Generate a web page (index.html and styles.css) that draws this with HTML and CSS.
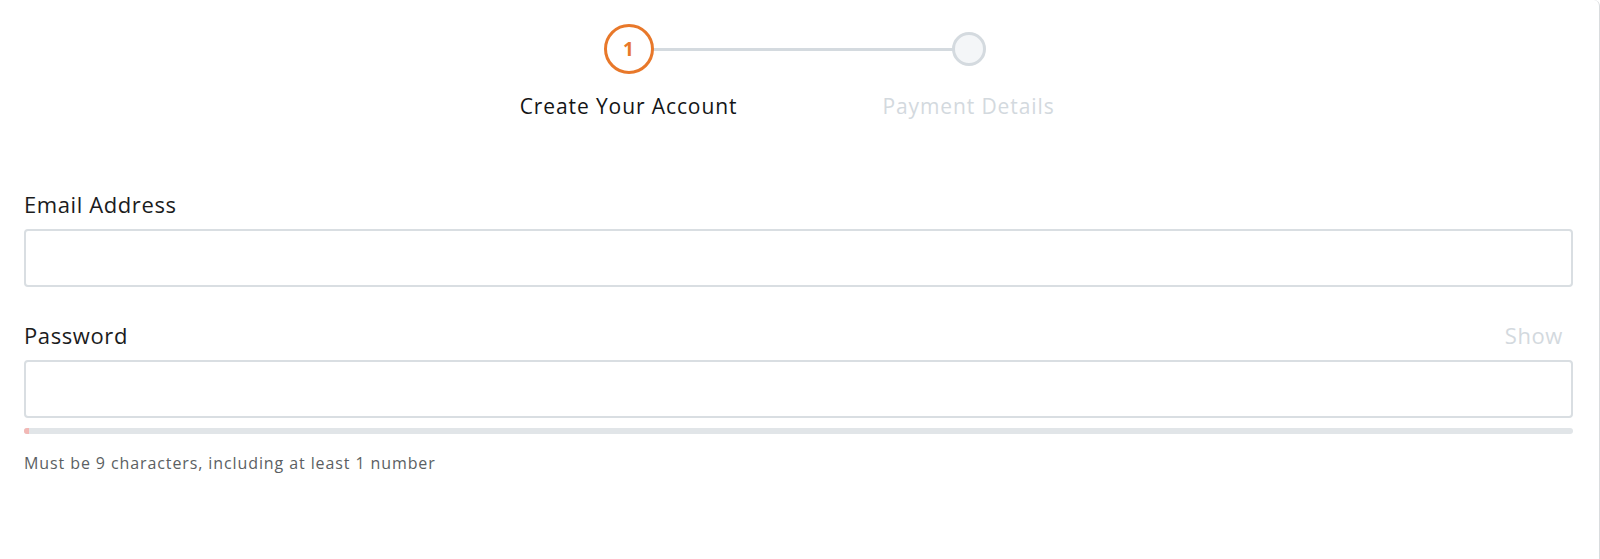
FILE: index.html
```html
<!DOCTYPE html>
<html lang="en">
<head>
<meta charset="utf-8">
<title>Create Your Account</title>
<link rel="stylesheet" href="styles.css">
</head>
<body>
<div class="card">
  <div class="stepper">
    <div class="step step-active">
      <div class="dot-wrap"><span class="dot">1</span></div>
      <div class="step-label">Create Your Account</div>
    </div>
    <div class="step step-pending">
      <div class="dot-wrap"><span class="dot"></span></div>
      <div class="step-label">Payment Details</div>
    </div>
  </div>

  <form class="form">
    <div class="field">
      <div class="field-head">
        <label class="label" for="email">Email Address</label>
      </div>
      <input class="input" id="email" type="email">
    </div>
    <div class="field">
      <div class="field-head">
        <label class="label" for="password">Password</label>
        <span class="show">Show</span>
      </div>
      <input class="input" id="password" type="password">
      <div class="strength"><div class="strength-fill" style="width:0.3%"></div></div>
      <p class="hint">Must be 9 characters, including at least 1 number</p>
    </div>
  </form>
</div>
</body>
</html>
```

FILE: styles.css
```css
* { box-sizing: border-box; }
html, body { margin: 0; padding: 0; background: #ffffff; }
body {
  font-family: "Open Sans", "Liberation Sans", Arial, sans-serif;
  color: #1b1c1d;
}
.card {
  width: 1600px;
  height: 559px;
  border-right: 1px solid #d9dcde;
  border-top-right-radius: 6px;
  padding: 24px 26px 0 24px;
}
.stepper {
  display: grid;
  grid-template-columns: 340px 340px;
  justify-content: center;
}
.step {
  display: flex;
  flex-direction: column;
  align-items: center;
  position: relative;
}
.dot-wrap {
  height: 50px;
  display: flex;
  align-items: center;
  justify-content: center;
  position: relative;
  z-index: 1;
}
.step-active::after {
  content: "";
  position: absolute;
  top: 24px;
  left: 170px;
  width: 340px;
  height: 3px;
  background: #d4dadf;
  z-index: 0;
}
.dot {
  display: flex;
  align-items: center;
  justify-content: center;
  border-radius: 50%;
  background: #fff;
}
.step-active .dot {
  width: 50px;
  height: 50px;
  border: 3px solid #e8782a;
  color: #e8782a;
  font-size: 19px;
  font-weight: 700;
}
.step-pending .dot {
  width: 34px;
  height: 34px;
  border: 3px solid #d4dadf;
  background: #f4f6f8;
}
.step-label {
  margin-top: 19px;
  font-size: 21px;
  line-height: 26px;
  letter-spacing: 0.9px;
}
.step-active .step-label { color: #141516; }
.step-pending .step-label { color: #d3d9de; }

.form {
  margin-top: 72px;
}
.field + .field { margin-top: 35px; }
.field-head {
  display: flex;
  justify-content: space-between;
  align-items: baseline;
  padding-right: 10px;
}
.label {
  font-size: 22px;
  line-height: 26px;
  letter-spacing: 0.6px;
}
.show {
  font-size: 22px;
  line-height: 26px;
  letter-spacing: 0.6px;
  color: #d3d9de;
}
.input {
  display: block;
  width: 100%;
  height: 58px;
  margin-top: 12px;
  border: 2px solid #d9dee2;
  border-radius: 4px;
  background: #fff;
  font: inherit;
}
.strength {
  margin-top: 10px;
  height: 6px;
  border-radius: 3px;
  background: #e1e5e8;
  overflow: hidden;
}
.strength-fill {
  height: 100%;
  background: #f2b8b5;
}
.hint {
  margin: 19px 0 0;
  font-size: 16px;
  line-height: 20px;
  color: #5b5f63;
  letter-spacing: 0.9px;
}
```
